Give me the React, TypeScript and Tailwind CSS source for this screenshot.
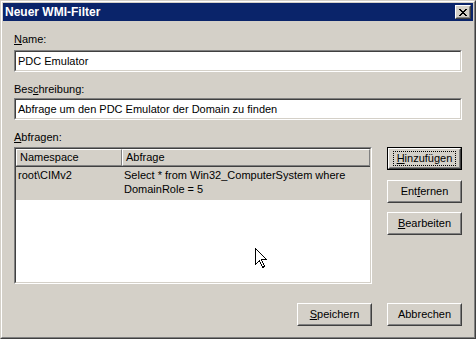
import type { ReactNode } from 'react';

function Sunken({ children, className = '' }: { children?: ReactNode; className?: string }) {
    return (
        <div className={`border border-t-[#808080] border-l-[#808080] border-r-white border-b-white ${className}`}>
            <div className="h-full w-full border border-t-[#404040] border-l-[#404040] border-r-[#d4d0c8] border-b-[#d4d0c8] bg-white">
                {children}
            </div>
        </div>
    );
}

function Button({ children, isDefault = false }: { children: ReactNode; isDefault?: boolean }) {
    if (isDefault) {
        return (
            <div className="h-[23px] w-[75px] border border-black">
                <div className="h-full w-full border border-t-white border-l-white border-r-[#404040] border-b-[#404040]">
                    <div className="flex h-full w-full items-center justify-center border border-t-[#d4d0c8] border-l-[#d4d0c8] border-r-[#808080] border-b-[#808080]">
                        <span className="flex h-[15px] w-[63px] items-center justify-center border border-dotted border-black leading-[13px]">
                            {children}
                        </span>
                    </div>
                </div>
            </div>
        );
    }
    return (
        <div className="h-[23px] w-[75px] border border-t-white border-l-white border-r-[#404040] border-b-[#404040]">
            <div className="flex h-full w-full items-center justify-center border border-t-[#d4d0c8] border-l-[#d4d0c8] border-r-[#808080] border-b-[#808080] leading-[13px]">
                {children}
            </div>
        </div>
    );
}

export default function App() {
    return (
        <div className="relative h-[339px] w-[476px] bg-[#d4d0c8] font-['Liberation_Sans',Arial,sans-serif] text-[11px] text-black">
            <div className="h-full w-full border border-t-[#d4d0c8] border-l-[#d4d0c8] border-r-[#404040] border-b-[#404040]">
                <div className="flex h-full w-full flex-col border border-t-white border-l-white border-r-[#808080] border-b-[#808080] p-px">
                    {/* title bar */}
                    <div className="flex h-[18px] items-center justify-between bg-[#0a246a] pl-[2px] pr-[2px]">
                        <span className="text-[12px] font-bold leading-[14px] text-white">Neuer WMI-Filter</span>
                        <div className="h-[14px] w-[16px] border border-t-white border-l-white border-r-[#404040] border-b-[#404040] bg-[#d4d0c8]">
                            <div className="flex h-full w-full items-center justify-center border border-t-[#d4d0c8] border-l-[#d4d0c8] border-r-[#808080] border-b-[#808080]">
                                <svg width="8" height="7" viewBox="0 0 8 7" shapeRendering="crispEdges">
                                    <path d="M0 0h2v1H0zM6 0h2v1H6zM1 1h2v1H1zM5 1h2v1H5zM2 2h4v1H2zM3 3h2v1H3zM2 4h4v1H2zM1 5h2v1H1zM5 5h2v1H5zM0 6h2v1H0zM6 6h2v1H6z" fill="black" />
                                </svg>
                            </div>
                        </div>
                    </div>

                    <div className="flex flex-1 flex-col px-[11px]">
                        <span className="mt-[12px] leading-[13px]"><u>N</u>ame:</span>
                        <Sunken className="mt-[4px] h-[22px] w-[448px]">
                            <div className="pl-[2px] pt-[3px] leading-[13px]">PDC Emulator</div>
                        </Sunken>

                        <span className="mt-[11px] leading-[13px]">Bes<u>c</u>hreibung:</span>
                        <Sunken className="mt-[2px] h-[22px] w-[448px]">
                            <div className="pl-[2px] pt-[3px] leading-[13px]">Abfrage um den PDC Emulator der Domain zu finden</div>
                        </Sunken>

                        <span className="mt-[11px] leading-[13px]"><u>A</u>bfragen:</span>

                        <div className="mt-[3px] flex">
                            <Sunken className="h-[137px] w-[358px]">
                                <div className="flex h-[18px] border-b border-b-[#404040]">
                                    <div className="flex w-[106px] items-center border border-t-white border-l-white border-r-[#808080] border-b-[#808080] bg-[#d4d0c8] pl-[3px] leading-[13px]">
                                        Namespace
                                    </div>
                                    <div className="flex flex-1 items-center border border-t-white border-l-white border-r-[#808080] border-b-[#808080] bg-[#d4d0c8] pl-[3px] leading-[13px]">
                                        Abfrage
                                    </div>
                                </div>
                                <div className="flex h-[33px] bg-[#d4d0c8] pt-[1px] leading-[14px]">
                                    <div className="w-[106px] pl-[2px]">root\CIMv2</div>
                                    <div className="flex-1 pl-[2px]">
                                        Select * from Win32_ComputerSystem where
                                        <br />
                                        DomainRole = 5
                                    </div>
                                </div>
                            </Sunken>

                            <div className="ml-[15px] flex flex-col">
                                <Button isDefault><span><u>H</u>inzufügen</span></Button>
                                <div className="mt-[10px]">
                                    <Button><span>Ent<u>f</u>ernen</span></Button>
                                </div>
                                <div className="mt-[9px]">
                                    <Button><span><u>B</u>earbeiten</span></Button>
                                </div>
                            </div>
                        </div>

                        <div className="mt-[19px] flex justify-end gap-[15px]">
                            <Button><span><u>S</u>peichern</span></Button>
                            <Button><span>Abbrechen</span></Button>
                        </div>
                    </div>
                </div>
            </div>

            {/* mouse pointer */}
            <svg className="absolute left-[255px] top-[248px]" width="12" height="20" viewBox="0 0 12 20" shapeRendering="crispEdges">
                <path d="M0.5 0.5V16.5L4.5 12.5L7.5 19.5L9.5 18.5L6.5 11.5H11.5Z" fill="white" stroke="black" strokeWidth="1" />
            </svg>
        </div>
    );
}
